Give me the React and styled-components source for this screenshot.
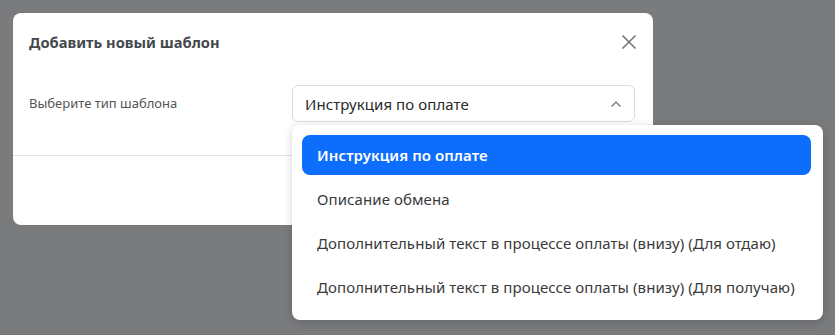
import React from "react";
import styled, { createGlobalStyle } from "styled-components";

const GlobalStyle = createGlobalStyle`
  html, body {
    margin: 0;
    padding: 0;
    background: #7a7b7d;
    font-family: "Noto Sans", "Open Sans", sans-serif;
  }
`;

const options = [
  "Инструкция по оплате",
  "Описание обмена",
  "Дополнительный текст в процессе оплаты (внизу) (Для отдаю)",
  "Дополнительный текст в процессе оплаты (внизу) (Для получаю)",
];

const App = () => {
  const selected = 0;
  return (
    <>
      <GlobalStyle />
      <Page>
        <Modal>
          <Header>
            <Title>Добавить новый шаблон</Title>
            <CloseButton aria-label="close">
              <svg width="16" height="16" viewBox="0 0 16 16">
                <path
                  d="M1.5 1.5 L14.5 14.5 M14.5 1.5 L1.5 14.5"
                  stroke="#707070"
                  strokeWidth="1.5"
                  fill="none"
                />
              </svg>
            </CloseButton>
          </Header>
          <Body>
            <Label>Выберите тип шаблона</Label>
            <SelectWrap>
              <SelectBox>
                <span>{options[selected]}</span>
                <svg width="12" height="8" viewBox="0 0 12 8">
                  <path
                    d="M1.5 6.5 L6 2 L10.5 6.5"
                    stroke="#6b6b6b"
                    strokeWidth="1.1"
                    fill="none"
                  />
                </svg>
              </SelectBox>
              <Menu>
                {options.map((opt, i) => (
                  <MenuItem key={opt} $active={i === selected}>
                    {opt}
                  </MenuItem>
                ))}
              </Menu>
            </SelectWrap>
          </Body>
          <Footer />
        </Modal>
      </Page>
    </>
  );
};

const Page = styled.div`
  padding: 13px;
  height: 335px;
  box-sizing: border-box;
`;

const Modal = styled.div`
  width: 640px;
  height: 212px;
  background: #fff;
  border-radius: 8px;
  box-sizing: border-box;
`;

const Header = styled.div`
  display: flex;
  align-items: center;
  justify-content: space-between;
  height: 58px;
  padding: 0 16px;
`;

const Title = styled.h5`
  margin: 0;
  font-size: 14.7px;
  font-weight: 700;
  color: #44474d;
`;

const CloseButton = styled.button`
  border: none;
  background: none;
  padding: 0;
  width: 16px;
  height: 16px;
  display: flex;
  cursor: pointer;
`;

const Body = styled.div`
  display: flex;
  align-items: flex-start;
  padding: 14px 18px 0 16px;
  height: 85px;
  box-sizing: border-box;
  border-bottom: 1px solid #e3e3e3;
`;

const Label = styled.div`
  width: 263px;
  font-size: 13px;
  color: #555;
  padding-top: 9px;
`;

const SelectWrap = styled.div`
  position: relative;
  flex: 1;
`;

const SelectBox = styled.div`
  height: 37px;
  box-sizing: border-box;
  border: 1px solid #dcdcdc;
  border-radius: 6px;
  display: flex;
  align-items: center;
  justify-content: space-between;
  padding: 0 12px;
  font-size: 15px;
  letter-spacing: 0.08px;
  color: #2a2a2a;
`;

const Menu = styled.div`
  position: absolute;
  top: 40px;
  left: 0;
  width: 531px;
  background: #fff;
  border-radius: 8px;
  box-shadow: 0 2px 10px rgba(0, 0, 0, 0.18);
  padding: 10px 12px 13px 10px;
  box-sizing: border-box;
  display: flex;
  flex-direction: column;
  gap: 4px;
`;

const MenuItem = styled.div`
  height: 40px;
  display: flex;
  align-items: center;
  padding: 0 15px;
  border-radius: 8px;
  font-size: 15px;
  letter-spacing: 0.08px;
  background: ${(p) => (p.$active ? "#0d6efd" : "transparent")};
  color: ${(p) => (p.$active ? "#fff" : "#3a3a3a")};
  font-weight: ${(p) => (p.$active ? 600 : 400)};
`;

const Footer = styled.div``;

export default App;
